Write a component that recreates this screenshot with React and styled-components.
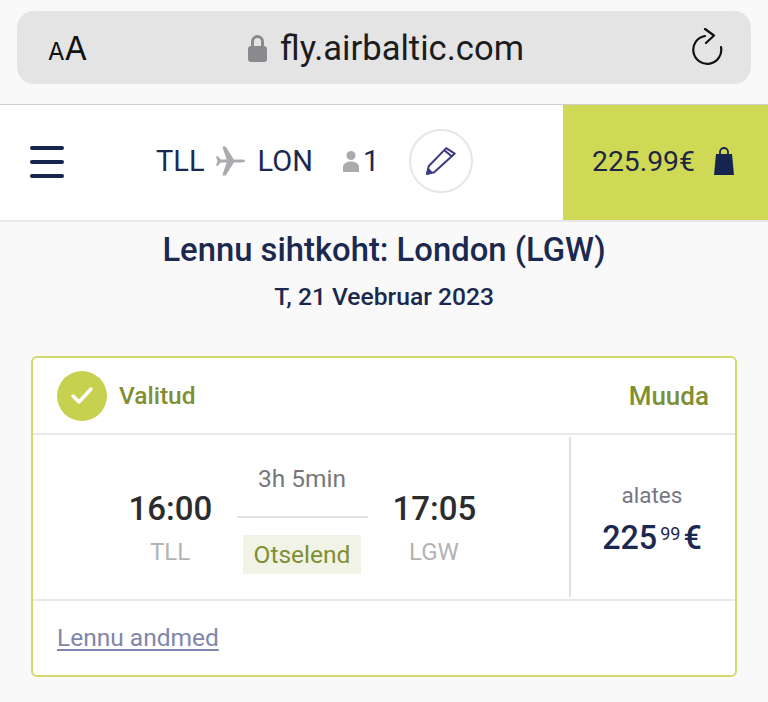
import React from 'react';
import styled, { createGlobalStyle } from 'styled-components';

const GlobalStyle = createGlobalStyle`
  html, body {
    margin: 0;
    padding: 0;
    background: #f9f9f9;
    font-family: Roboto, "Liberation Sans", sans-serif;
  }
`;

const Page = styled.div`
  width: 768px;
  height: 702px;
  overflow: hidden;
  background: #f9f9f9;
`;

const BrowserBar = styled.div`
  height: 104px;
  box-sizing: border-box;
  padding: 11px 17px 20px;
`;

const AddressField = styled.div`
  height: 73px;
  box-sizing: border-box;
  padding: 0 28px 0 31px;
  display: flex;
  align-items: center;
  background: #e4e4e4;
  border-radius: 17px;
`;

const TextSize = styled.div`
  width: 200px;
  color: #111;
  font-family: Inter, sans-serif;
  font-size: 33px;
  display: flex;
  align-items: baseline;
  small {
    font-size: 24px;
  }
`;

const Url = styled.div`
  flex: 1;
  display: flex;
  align-items: center;
  gap: 13px;
  color: #1c1c1e;
  font-size: 34.6px;
`;

const Header = styled.header`
  height: 118px;
  box-sizing: border-box;
  display: flex;
  background: #fff;
  border-top: 1px solid #cfcfcf;
  border-bottom: 2px solid #e8e8e8;
`;

const Burger = styled.div`
  width: 156px;
  box-sizing: border-box;
  padding: 41px 0 0 30px;
  span {
    display: block;
    width: 34px;
    height: 4px;
    margin-bottom: 10px;
    background: #16264e;
    border-radius: 2px;
  }
`;

const Route = styled.div`
  flex: 1;
  display: flex;
  align-items: center;
  padding-bottom: 3px;
  color: #1b2950;
  font-size: 29px;
`;

const RouteIcon = styled.span`
  display: flex;
  margin: 0 ${(p) => p.$right}px 0 ${(p) => p.$left}px;
`;

const EditButton = styled.div`
  width: 64px;
  height: 64px;
  box-sizing: border-box;
  margin-left: 30px;
  display: flex;
  align-items: center;
  justify-content: center;
  border: 2px solid #e6e6ea;
  border-radius: 50%;
`;

const Basket = styled.div`
  width: 205px;
  display: flex;
  align-items: center;
  gap: 19px;
  padding: 0 0 3px 29px;
  box-sizing: border-box;
  background: #cfd955;
  color: #1d2744;
  font-size: 28.3px;
`;

const Heading = styled.h1`
  margin: 8px 0 0;
  text-align: center;
  color: #1b2950;
  font-size: 32.8px;
  line-height: 40px;
  font-weight: 500;
`;

const DateLine = styled.div`
  margin-top: 13px;
  text-align: center;
  color: #1b2950;
  font-size: 24.6px;
  line-height: 28px;
  font-weight: 500;
`;

const Card = styled.section`
  width: 706px;
  height: 321px;
  box-sizing: border-box;
  margin: 45px 0 0 31px;
  background: #fff;
  border: 2px solid #d2da6e;
  border-radius: 6px;
`;

const CardHead = styled.div`
  height: 77px;
  box-sizing: border-box;
  padding: 0 26px 0 24px;
  display: flex;
  align-items: center;
  gap: 12px;
  border-bottom: 2px solid #e8e8e8;
  color: #7f8f33;
  font-size: 24.5px;
  font-weight: 500;
`;

const CheckBadge = styled.div`
  width: 50px;
  height: 50px;
  display: flex;
  align-items: center;
  justify-content: center;
  background: #c8d14f;
  border-radius: 50%;
`;

const Change = styled.div`
  margin-left: auto;
  font-size: 26px;
`;

const FlightRow = styled.div`
  height: 164px;
  display: flex;
  border-bottom: 2px solid #e8e8e8;
`;

const Schedule = styled.div`
  width: 538px;
  margin: 2px 0;
  padding-left: 2px;
  box-sizing: border-box;
  display: flex;
  justify-content: center;
  align-items: center;
  gap: 25px;
  border-right: 2px solid #e0e0e0;
`;

const Stop = styled.div`
  width: 83px;
  padding-top: 21px;
  text-align: center;
`;

const Time = styled.div`
  color: #2c2c2e;
  font-size: 33px;
  line-height: 40px;
  font-weight: 500;
`;

const Airport = styled.div`
  margin-top: 8px;
  color: #b3b3b3;
  font-size: 24px;
  line-height: 30px;
`;

const Duration = styled.div`
  width: 131px;
  margin-top: 3px;
  display: flex;
  flex-direction: column;
  align-items: center;
`;

const DurationText = styled.div`
  color: #77777b;
  font-size: 24.5px;
  line-height: 30px;
`;

const DurationLine = styled.div`
  align-self: stretch;
  height: 2px;
  margin: 22px 0 17px;
  background: #e3e3e3;
`;

const DirectTag = styled.div`
  padding: 0 11px;
  background: #f1f3e6;
  color: #7f8f33;
  font-size: 24.5px;
  line-height: 39px;
`;

const PriceBox = styled.div`
  flex: 1;
  padding: 3px 2px 0 0;
  display: flex;
  flex-direction: column;
  align-items: center;
  justify-content: center;
`;

const From = styled.div`
  color: #77777f;
  font-size: 22.5px;
  line-height: 28px;
`;

const Price = styled.div`
  margin-top: 10px;
  color: #1b2950;
  font-size: 32.3px;
  line-height: 38px;
  font-weight: 500;
  sup {
    font-size: 18px;
    font-weight: 400;
    line-height: 0;
    vertical-align: 9px;
    margin: 0 3px 0 3px;
  }
`;

const DetailsLink = styled.a`
  display: inline-block;
  margin: 22px 0 0 24px;
  color: #7f86ab;
  font-size: 24.5px;
  line-height: 30px;
  text-decoration: underline;
  text-underline-offset: 3px;
`;

export default function App() {
  return (
    <Page>
      <GlobalStyle />
      <BrowserBar>
        <AddressField>
          <TextSize>
            <small>A</small>A
          </TextSize>
          <Url>
            <svg width="19" height="28" viewBox="0 0 19 28">
              <path d="M4.5 13V7.5a5 5 0 0 1 10 0V13" fill="none" stroke="#8a8a8e" strokeWidth="3" />
              <rect x="0" y="12" width="19" height="16" rx="3" fill="#8a8a8e" />
            </svg>
            fly.airbaltic.com
          </Url>
          <svg width="32" height="39" viewBox="0 0 32 39" fill="none" stroke="#111" strokeWidth="2.2" strokeLinecap="round" strokeLinejoin="round">
            <path d="M14 8A14 14 0 1 0 30 19" />
            <path d="M14 1l9 6.5-8 7.5" />
          </svg>
        </AddressField>
      </BrowserBar>

      <Header>
        <Burger>
          <span />
          <span />
          <span />
        </Burger>
        <Route>
          TLL
          <RouteIcon $left={10} $right={12}>
            <svg width="31" height="30" viewBox="0 0 32 30">
              <path d="M31 15c0 1-2 1.5-4 1.5H19.5L11 30H7.5L12 16.5H6L3 20H1l1.5-5L1 10h2l3 3.5h6L7.5 0H11l8.5 13.5H27c2 0 4 .5 4 1.500z" fill="#a9abae" />
            </svg>
          </RouteIcon>
          LON
          <RouteIcon $left={30} $right={4}>
            <svg width="16" height="21" viewBox="0 0 16 21" fill="#a9abae">
              <circle cx="8" cy="4.5" r="4.5" />
              <path d="M0 21v-5c0-3 3-5.5 8-5.5s8 2.5 8 5.5v5z" />
            </svg>
          </RouteIcon>
          1
          <EditButton>
            <svg width="30" height="28" viewBox="0 0 33 31" fill="none" stroke="#3b3a80" strokeWidth="2.2" strokeLinejoin="round">
              <path d="M1 29.7L3 21 22.3 1.3 31.7 7.3 9 28z" />
              <path d="M20.7 4L29 10.7" />
              <path d="M1 29.7L6 28.5 3 25z" fill="#3b3a80" />
            </svg>
          </EditButton>
        </Route>
        <Basket>
          225.99€
          <svg width="20" height="28" viewBox="0 0 20 28">
            <path d="M6 8V5a4 4 0 0 1 8 0v3" fill="none" stroke="#14264f" strokeWidth="1.8" />
            <path d="M2 7h16l2 21H0z" fill="#14264f" />
          </svg>
        </Basket>
      </Header>

      <Heading>Lennu sihtkoht: London (LGW)</Heading>
      <DateLine>T, 21 Veebruar 2023</DateLine>

      <Card>
        <CardHead>
          <CheckBadge>
            <svg width="24" height="19" viewBox="0 0 24 19" fill="none" stroke="#fff" strokeWidth="3.5" strokeLinecap="round" strokeLinejoin="round">
              <path d="M3 10l6 6L21 3" />
            </svg>
          </CheckBadge>
          Valitud
          <Change>Muuda</Change>
        </CardHead>
        <FlightRow>
          <Schedule>
            <Stop>
              <Time>16:00</Time>
              <Airport>TLL</Airport>
            </Stop>
            <Duration>
              <DurationText>3h 5min</DurationText>
              <DurationLine />
              <DirectTag>Otselend</DirectTag>
            </Duration>
            <Stop>
              <Time>17:05</Time>
              <Airport>LGW</Airport>
            </Stop>
          </Schedule>
          <PriceBox>
            <From>alates</From>
            <Price>
              225<sup>99</sup>€
            </Price>
          </PriceBox>
        </FlightRow>
        <DetailsLink>Lennu andmed</DetailsLink>
      </Card>
    </Page>
  );
}
